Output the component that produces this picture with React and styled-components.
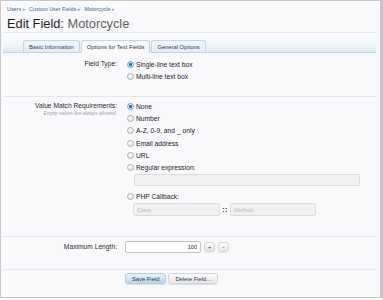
import React, { useState } from 'react';
import styled, { createGlobalStyle } from 'styled-components';

const GlobalStyle = createGlobalStyle`
  html, body {
    margin: 0;
    padding: 0;
    background: #ffffff;
  }
  body {
    font-family: "Liberation Sans", Arial, sans-serif;
    color: #222;
  }
`;

const Frame = styled.div`
  box-sizing: border-box;
  width: 383px;
  height: 298px;
  border-top: 1px solid #c9c9cc;
  border-left: 1px solid #c9c9cc;
  border-right: 3px solid #c4c4c8;
  border-bottom: 1px solid #c4c4c8;
  background: #f9f9fc;
  overflow: hidden;
`;

const Inner = styled.div`
  margin: 0 4px 0 2px;
`;

const Header = styled.div`
  padding: 4px 0 0 4px;
  height: 32px;
  box-sizing: border-box;
  border-bottom: 1px solid #e3e3ea;
`;

const Crumbs = styled.div`
  font-size: 5.4px;
  line-height: 8px;
  color: #999;
`;

const Crumb = styled.a`
  color: #35699b;
  text-decoration: none;
  margin-right: 3px;

  &::after {
    content: '▸';
    color: #8a9bb0;
    margin-left: 2px;
    font-size: 4.5px;
  }
`;

const Title = styled.h1`
  margin: 2px 0 0;
  font-size: 12.8px;
  line-height: 16px;
  font-weight: normal;
  color: #1d1d1d;

  em {
    font-style: normal;
    color: #5f5f62;
  }
`;

const TabStrip = styled.div`
  display: flex;
  align-items: flex-end;
  gap: 1px;
  height: 20px;
  box-sizing: border-box;
  padding-left: 20px;
  background: linear-gradient(to bottom, #fbfcfe 0%, #f1f7fa 55%, #dcecf2 100%);
  border-bottom: 1px solid #bfd6df;
`;

const Tab = styled.button`
  font-family: inherit;
  font-size: 5.8px;
  height: 13px;
  margin-bottom: -1px;
  padding: 0 5px;
  border: 1px solid #c6d6e0;
  border-bottom: ${(p) => (p.$active ? 'none' : '1px solid #bfd6df')};
  border-radius: 3px 3px 0 0;
  background: ${(p) => (p.$active ? '#f9f9fc' : 'linear-gradient(to bottom, #f1f6fa, #e2edf4)')};
  color: ${(p) => (p.$active ? '#333' : '#2c3e50')};
  cursor: pointer;
`;

const Section = styled.div`
  display: grid;
  grid-template-columns: 114px 1fr;
  column-gap: 9px;
  padding: ${(p) => p.$pad};
  border-bottom: ${(p) => (p.$last ? 'none' : '1px solid #e6e6ee')};
`;

const Label = styled.div`
  text-align: right;
  font-size: 6.7px;
  line-height: ${(p) => p.$lh || '12.3px'};
  color: #2a2a2a;
`;

const Explain = styled.div`
  text-align: right;
  font-size: 4.9px;
  line-height: 5px;
  font-style: italic;
  color: #a0a0a6;
  margin-top: -1px;
`;

const Controls = styled.div`
  display: flex;
  flex-direction: column;
`;

const Option = styled.label`
  display: flex;
  align-items: center;
  height: ${(p) => p.$h || '12.3px'};
  font-size: 6.7px;
  color: #222;
  cursor: pointer;
`;

const Radio = styled.span`
  box-sizing: border-box;
  width: 7px;
  height: 7px;
  margin-left: 1px;
  margin-right: 2px;
  border-radius: 50%;
  border: 1px solid ${(p) => (p.$on ? '#6f9bc8' : '#aaa')};
  background: ${(p) =>
    p.$on
      ? 'radial-gradient(circle, #2d5f95 0 1.3px, #dbe8f5 1.6px)'
      : 'linear-gradient(to bottom, #fdfdfd, #e6e6e6)'};
  flex: none;
`;

const TextBox = styled.input`
  box-sizing: border-box;
  font-family: inherit;
  font-size: 5.6px;
  font-style: ${(p) => (p.disabled ? 'italic' : 'normal')};
  height: ${(p) => p.$h || '12px'};
  width: ${(p) => p.$w};
  padding: 0 3px;
  border: 1px solid ${(p) => (p.disabled ? '#dcdcdc' : '#c2c2c6')};
  border-radius: 2px;
  background: ${(p) => (p.disabled ? '#f1f1f2' : '#ffffff')};
  color: #222;
  text-align: ${(p) => p.$align || 'left'};
  outline: none;

  &::placeholder {
    color: #b9b9bd;
  }
`;

const Indent = styled.div`
  display: flex;
  align-items: center;
  gap: ${(p) => p.$gap || '0'};
  padding-left: ${(p) => p.$left || '8px'};
  margin-bottom: ${(p) => p.$mb || '0'};
`;

const Colons = styled.span`
  font-size: 7.5px;
  color: #333;
  font-weight: bold;
  letter-spacing: 0.5px;
`;

const SpinRow = styled.div`
  display: flex;
  align-items: center;
  gap: 3px;
  margin-left: -1px;
`;

const Spin = styled.button`
  box-sizing: border-box;
  width: 11px;
  height: 10px;
  padding: 0;
  font-family: inherit;
  font-size: 5.5px;
  line-height: 8px;
  border: 1px solid #d6d6da;
  border-radius: 3px;
  background: linear-gradient(to bottom, #fdfdfd, #e3e3e6);
  box-shadow: 0 1px 1px rgba(0, 0, 0, 0.08);
  color: #333;
  cursor: pointer;
`;

const ButtonRow = styled.div`
  display: flex;
  gap: 2px;
  margin-left: -1px;
`;

const Button = styled.button`
  box-sizing: border-box;
  height: 11px;
  padding: 0 6px;
  font-family: inherit;
  font-size: 5.8px;
  border-radius: 3px;
  border: 1px solid ${(p) => (p.$primary ? '#b3cde0' : '#d4d4d8')};
  background: ${(p) =>
    p.$primary
      ? 'linear-gradient(to bottom, #e8f2f8, #bcd6e7)'
      : 'linear-gradient(to bottom, #fdfdfd, #e6e6e9)'};
  box-shadow: 0 1px 1px rgba(0, 0, 0, 0.1);
  color: #26394a;
  cursor: pointer;
`;

const matchOptions = [
  'None',
  'Number',
  'A-Z, 0-9, and _ only',
  'Email address',
  'URL',
  'Regular expression:',
];

const App = () => {
  const [fieldType, setFieldType] = useState('single');
  const [match, setMatch] = useState('None');
  const [maxLength, setMaxLength] = useState(100);

  return (
    <>
      <GlobalStyle />
      <Frame>
        <Inner>
          <Header>
            <Crumbs>
              <Crumb href="#">Users</Crumb>
              <Crumb href="#">Custom User Fields</Crumb>
              <Crumb href="#">Motorcycle</Crumb>
            </Crumbs>
            <Title>
              Edit Field: <em>Motorcycle</em>
            </Title>
          </Header>

          <TabStrip>
            <Tab>Basic Information</Tab>
            <Tab $active>Options for Text Fields</Tab>
            <Tab>General Options</Tab>
          </TabStrip>

          <Section $pad="5px 0 13px">
            <Label $lh="12.5px">Field Type:</Label>
            <Controls>
              <Option $h="12.5px" onClick={() => setFieldType('single')}>
                <Radio $on={fieldType === 'single'} />
                Single-line text box
              </Option>
              <Option $h="12.5px" onClick={() => setFieldType('multi')}>
                <Radio $on={fieldType === 'multi'} />
                Multi-line text box
              </Option>
            </Controls>
          </Section>

          <Section $pad="3px 0 20px">
            <div>
              <Label>Value Match Requirements:</Label>
              <Explain>Empty values are always allowed.</Explain>
            </div>
            <Controls>
              {matchOptions.map((opt) => (
                <Option key={opt} onClick={() => setMatch(opt)}>
                  <Radio $on={match === opt} />
                  {opt}
                </Option>
              ))}
              <Indent $mb="5px">
                <TextBox disabled $w="226px" />
              </Indent>
              <Option onClick={() => setMatch('PHP Callback:')}>
                <Radio $on={match === 'PHP Callback:'} />
                PHP Callback:
              </Option>
              <Indent $left="7px" $gap="2px">
                <TextBox disabled $w="87px" $h="13px" placeholder="Class" />
                <Colons>::</Colons>
                <TextBox disabled $w="86px" $h="13px" placeholder="Method" />
              </Indent>
            </Controls>
          </Section>

          <Section $pad="4px 0 16px">
            <Label $lh="12px">Maximum Length:</Label>
            <SpinRow>
              <TextBox
                $w="76px"
                $align="right"
                value={maxLength}
                onChange={(e) => setMaxLength(e.target.value)}
              />
              <Spin onClick={() => setMaxLength((v) => Number(v) + 1)}>+</Spin>
              <Spin onClick={() => setMaxLength((v) => Number(v) - 1)}>-</Spin>
            </SpinRow>
          </Section>

          <Section $pad="3px 0 0" $last>
            <div />
            <ButtonRow>
              <Button $primary>Save Field</Button>
              <Button>Delete Field...</Button>
            </ButtonRow>
          </Section>
        </Inner>
      </Frame>
    </>
  );
};

export default App;
